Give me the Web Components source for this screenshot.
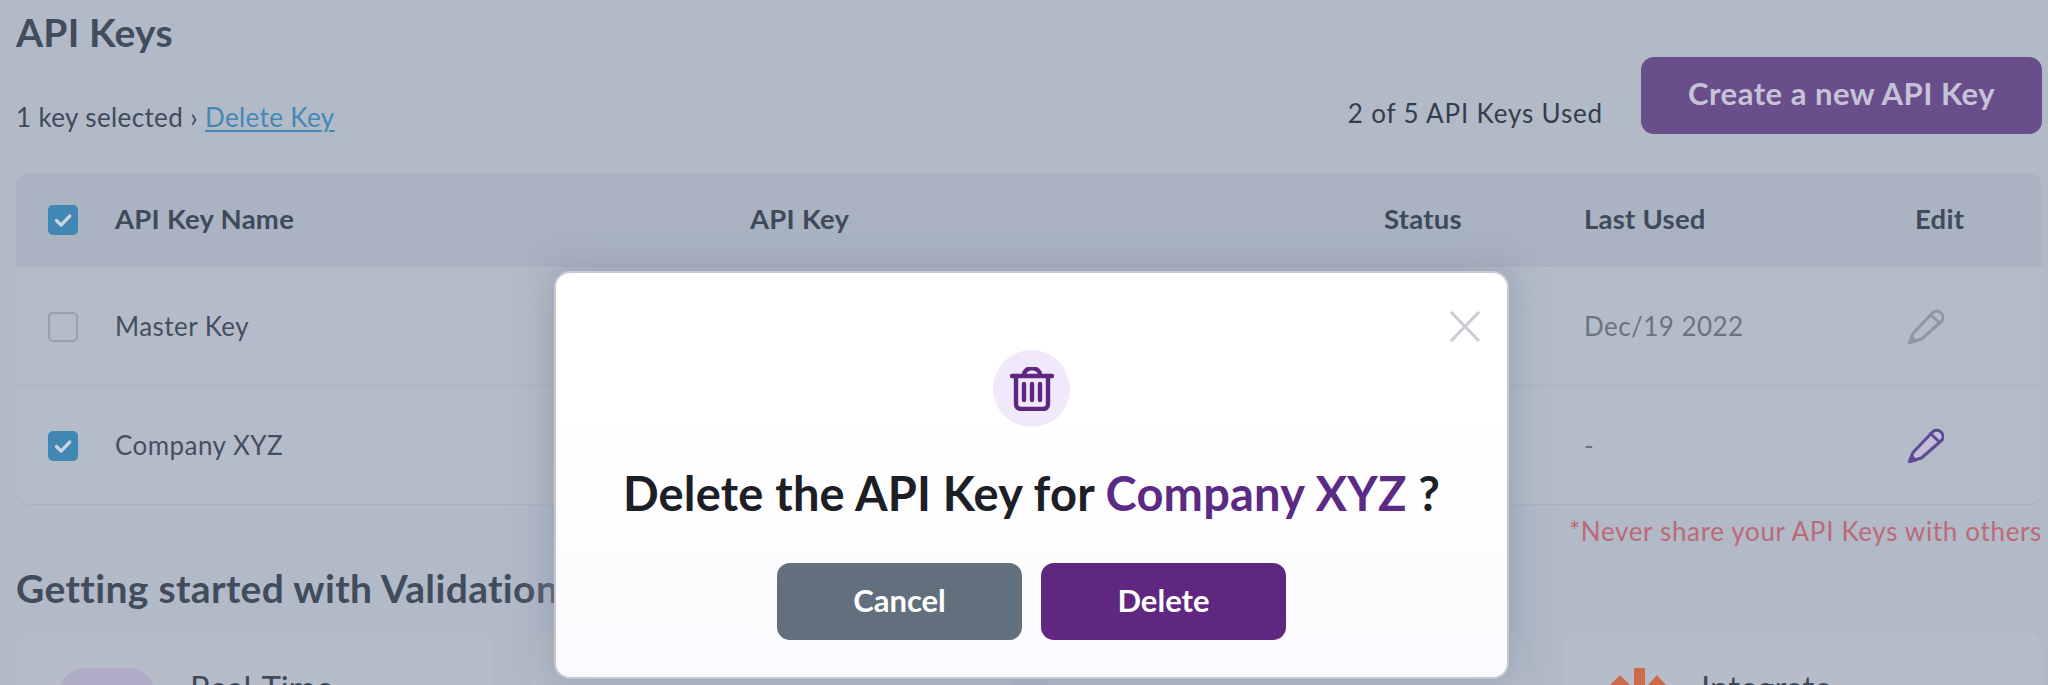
<!DOCTYPE html>
<html>
<head>
<meta charset="utf-8">
<title>API Keys</title>
<style>
  html, body { margin: 0; height: 685px; overflow: hidden; background: #b2bac8; }
  body { font-family: "Lato", "Noto Sans", sans-serif; color: #3f4a5a; }
  a { color: #4389b5; text-decoration-thickness: 2px; text-underline-offset: 3px; }
</style>
</head>
<body>
<keys-page>
  <keys-toolbar>
    <span slot="title">API Keys</span>
    <span slot="selected">1 key selected › <a href="#">Delete Key</a></span>
    <span slot="count">2 of 5 API Keys Used</span>
    <span slot="action">Create a new API Key</span>
  </keys-toolbar>
  <keys-table>
    <key-row head checked>
      <span slot="name">API Key Name</span>
      <span slot="key">API Key</span>
      <span slot="status">Status</span>
      <span slot="last">Last Used</span>
      <span slot="edit">Edit</span>
    </key-row>
    <key-row>
      <span slot="name">Master Key</span>
      <span slot="last">Dec/19 2022</span>
      <edit-pencil slot="edit" disabled></edit-pencil>
    </key-row>
    <key-row checked>
      <span slot="name">Company XYZ</span>
      <span slot="last">-</span>
      <edit-pencil slot="edit"></edit-pencil>
    </key-row>
  </keys-table>
  <keys-note>*Never share your API Keys with others</keys-note>
  <start-section>
    <span slot="title">Getting started with Validation</span>
    <start-card>Real-Time<real-icon slot="icon"></real-icon></start-card>
    <start-card></start-card>
    <start-card></start-card>
    <start-card>Integrate<integrate-icon slot="icon"></integrate-icon></start-card>
  </start-section>
</keys-page>
<confirm-modal>
  <span slot="title">Delete the API Key for</span>
  <span slot="name">Company XYZ</span>
</confirm-modal>

<script>
function define(name, html) {
  const template = document.createElement('template')
  template.innerHTML = html
  customElements.define(name, class extends HTMLElement {
    constructor() {
      super()
      this.attachShadow({ mode: 'open' })
      this.shadowRoot.appendChild(template.content.cloneNode(true))
    }
  })
}

define('keys-page', `
<style>
  :host { display: flex; flex-direction: column; padding: 0 6px 0 16px; height: 685px; box-sizing: border-box; overflow: hidden; }
</style>
<slot></slot>`)

define('keys-toolbar', `
<style>
  :host { display: flex; justify-content: space-between; align-items: flex-end; height: 134px; flex: none; }
  .left { display: flex; flex-direction: column; }
  .title { font-size: 39px; line-height: 44px; font-weight: 700; letter-spacing: .2px; color: #414c5c; }
  .selected { font-size: 26px; line-height: 34px; margin-top: 46px; letter-spacing: .38px; }
  .right { display: flex; align-items: flex-end; gap: 38px; }
  .count { font-size: 26px; line-height: 34px; margin-bottom: 4px; color: #343d4b; letter-spacing: .85px; }
  .action { display: flex; align-items: center; justify-content: center; width: 401px; height: 77px; padding-bottom: 6px; box-sizing: border-box; border-radius: 13px; background: #684f8c; color: #c6c3d7; font-size: 31px; font-weight: 700; letter-spacing: .5px; }
</style>
<div class="left">
  <div class="title"><slot name="title"></slot></div>
  <div class="selected"><slot name="selected"></slot></div>
</div>
<div class="right">
  <div class="count"><slot name="count"></slot></div>
  <div class="action"><slot name="action"></slot></div>
</div>`)

define('keys-table', `
<style>
  :host { display: block; margin-top: 39px; border-radius: 14px; overflow: hidden; background: #b5bcc9; flex: none; box-shadow: 0 1px 0 #a9b2c1; }
</style>
<slot></slot>`)

const check = `<svg viewBox="0 0 30 30" width="30" height="30"><path d="M8.500 15.500l4.600 4.600 8.600-9" fill="none" stroke="#ccd3e0" stroke-width="3.400" stroke-linecap="round" stroke-linejoin="round"/></svg>`

define('key-row', `
<style>
  :host { display: grid; grid-template-columns: 99px 635px 634px 200px 331px 126px; align-items: center; height: 119px; border-top: 1px solid #a9b2c1; box-sizing: border-box; font-size: 26px; letter-spacing: .45px; color: #444f5f; }
  :host(:first-child) { border-top: 0; height: 93px; }
  :host([head]) { background: #a9b3c2; font-weight: 700; font-size: 27.500px; color: #3f4a5a; letter-spacing: .25px; padding-bottom: 2px; }
  .box { width: 30px; height: 30px; margin-left: 32px; margin-top: 2px; box-sizing: border-box; border-radius: 5px; border: 2px solid #989fae; }
  :host([checked]) .box { border: 0; background: #4087b4; }
  :host(:not([checked])) svg { display: none; }
  .last { color: #6a7481; }
  :host([head]) .last { color: #3f4a5a; }
</style>
<div class="box">${check}</div>
<div><slot name="name"></slot></div>
<div><slot name="key"></slot></div>
<div><slot name="status"></slot></div>
<div class="last"><slot name="last"></slot></div>
<div><slot name="edit"></slot></div>`)

define('edit-pencil', `
<style>
  :host { display: block; width: 38px; height: 38px; margin-left: -9px; color: #5c4a93; --fill: #c3bdda; }
  :host([disabled]) { color: #9195a6; --fill: none; }
  svg { display: block; }
</style>
<svg viewBox="0 0 38 38" width="38" height="38" fill="none" stroke="currentColor" stroke-width="3" stroke-linejoin="round" stroke-linecap="round">
  <path d="M3.500 35.500L7 26.500 27 5.500A6.300 6.300 0 0 1 36 14L15.500 32z" fill="var(--fill)"/>
  <path d="M24.500 7.500L33.500 16"/>
  <path d="M3.500 35.500l2-5.500 4 4z" fill="currentColor"/>
</svg>`)

define('keys-note', `
<style>
  :host { display: block; text-align: right; font-size: 26px; line-height: 34px; margin-top: 10px; color: #bb6a77; letter-spacing: .66px; flex: none; }
</style>
<slot></slot>`)

define('start-section', `
<style>
  :host { display: block; margin-top: 18px; flex: none; }
  .title { font-size: 39px; line-height: 44px; font-weight: 700; color: #414c5c; letter-spacing: .35px; white-space: nowrap; }
  .cards { display: grid; grid-template-columns: repeat(4, 1fr); gap: 38px; margin-top: 21px; }
</style>
<div class="title"><slot name="title"></slot></div>
<div class="cards"><slot></slot></div>`)

define('start-card', `
<style>
  :host { display: flex; gap: 35px; height: 130px; padding: 37px 0 0 43px; box-sizing: border-box; border-radius: 18px; background: #b6bdc9; font-size: 33px; line-height: 38px; color: #3f4a5a; }
</style>
<slot name="icon"></slot><div><slot></slot></div>`)

define('real-icon', `
<style>
  :host { display: block; width: 96px; height: 96px; border-radius: 26px; background: #aeacc6; }
</style>`)

define('integrate-icon', `
<style>
  :host { display: block; width: 56px; height: 56px; margin-left: 3px; }
  svg { display: block; }
</style>
<svg viewBox="0 0 56 56" width="56" height="56" fill="#cc6a4c">
  <rect x="24" y="0" width="11" height="56"/>
  <path d="M0 17L10 7l10 10v39H0zM38 17l9-10 9 10v39H38z"/>
</svg>`)

define('confirm-modal', `
<style>
  :host { position: absolute; left: 554px; top: 271px; width: 955px; height: 408px; box-sizing: border-box; display: flex; flex-direction: column; align-items: center; border-radius: 16px; border: 2px solid #c3c8d1; background: linear-gradient(180deg, #ffffff 0%, #ffffff 35%, #fafafe 100%); box-shadow: 0 0 34px 10px rgba(140, 150, 168, .55); }
  .close { position: absolute; top: 38px; right: 26px; display: block; }
  .circle { display: flex; align-items: center; justify-content: center; width: 77px; height: 77px; margin-top: 77px; border-radius: 50%; background: #efe9fb; }
  h2 { margin: 39px 0 0; font-size: 47px; line-height: 54px; font-weight: 700; color: #1c2026; letter-spacing: .2px; white-space: pre; }
  .name { color: #5b2a85; }
  .buttons { display: flex; gap: 19px; margin-top: 43px; }
  .buttons div { display: flex; align-items: center; justify-content: center; width: 245px; height: 77px; padding-bottom: 3px; box-sizing: border-box; border-radius: 13px; color: #fff; font-size: 31px; font-weight: 700; }
  .cancel { background: #62707e; }
  .delete { background: #5f2780; }
</style>
<svg class="close" viewBox="0 0 32 32" width="32" height="32" fill="none" stroke="#c9ccd2" stroke-width="3"><path d="M2 1l28 29M30 1L2 30"/></svg>
<div class="circle">
  <svg viewBox="0 0 44 44" width="44" height="44" fill="none" stroke="#5f2780" stroke-width="4.400" stroke-linecap="round" stroke-linejoin="round">
    <path d="M2 9h40"/>
    <path d="M14 8c0-9 16-9 16 0"/>
    <path d="M6 9v28c0 3 2 5 5 5h22c3 0 5-2 5-5V9"/>
    <path d="M14 17v16M22 17v16M30 17v16"/>
  </svg>
</div>
<h2><slot name="title"></slot> <span class="name"><slot name="name"></slot></span> ?</h2>
<div class="buttons">
  <div class="cancel">Cancel</div>
  <div class="delete">Delete</div>
</div>`)
</script>
</body>
</html>
